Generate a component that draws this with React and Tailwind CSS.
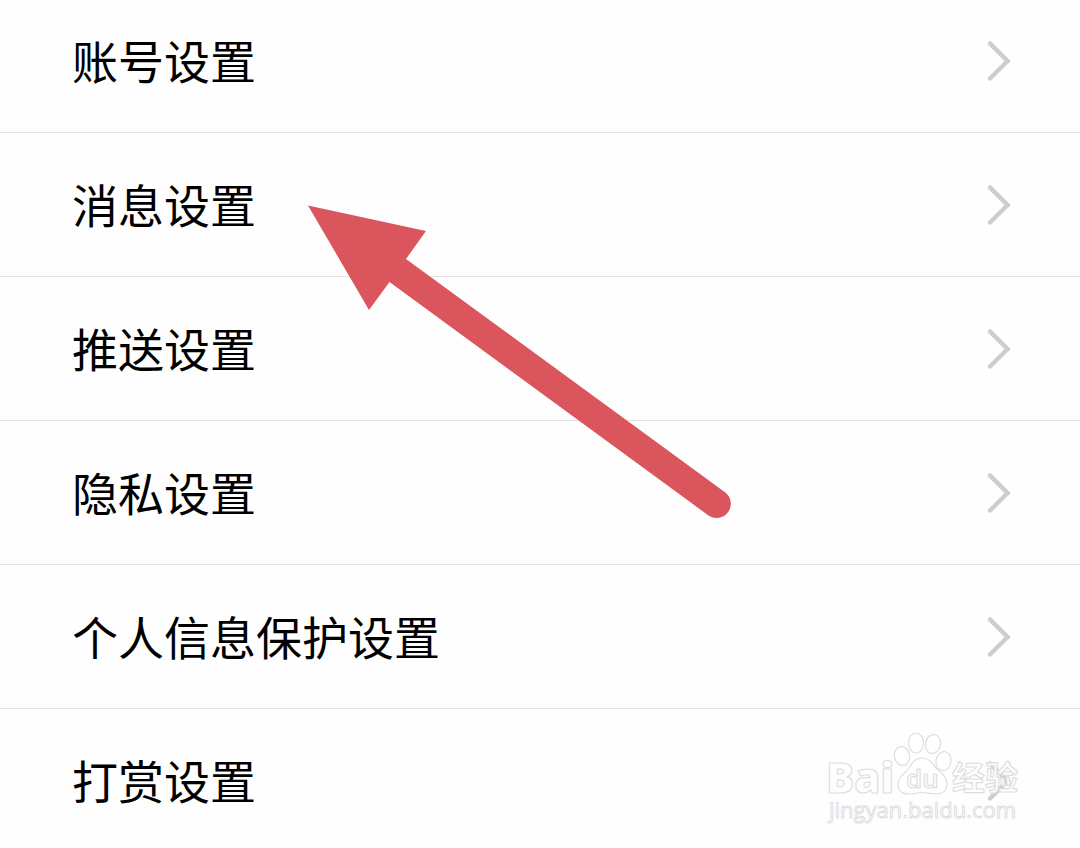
const settings = [
  "账号设置",
  "消息设置",
  "推送设置",
  "隐私设置",
  "个人信息保护设置",
  "打赏设置",
];

function Chevron() {
  return (
    <svg className="h-11 w-7 shrink-0" viewBox="0 0 28 44" fill="none" aria-hidden="true">
      <path d="M6 4.500 L23.500 22 L6 39.500" stroke="#cdcdcd" strokeWidth="4.500" strokeLinecap="round" strokeLinejoin="miter" />
    </svg>
  );
}

function SettingRow({ label }) {
  return (
    <li className="border-b border-[#e2e2e2] last:border-b-0">
      <a href="#" className="flex h-[143px] items-center justify-between pr-[68px] pl-[72px]">
        <span className="pb-1 text-[46px] leading-none text-black">{label}</span>
        <Chevron />
      </a>
    </li>
  );
}

function Arrow() {
  return (
    <svg
      className="pointer-events-none absolute top-[205px] left-[308px] h-[315px] w-[424px]"
      viewBox="308 205 424 315"
      aria-hidden="true"
    >
      <path d="M308 205.500 L426 231 L406 259 L725.700 492.700 A14.300 14.300 0 0 1 708.800 515.700 L389.500 282 L369 310 Z" fill="#db565c" />
    </svg>
  );
}

function Watermark() {
  return (
    <svg
      className="pointer-events-none absolute right-[54px] bottom-[22px] h-[102px] w-[204px] font-['Open_Sans','Noto_Sans',sans-serif]"
      viewBox="822 728 204 102"
      fill="#ffffff"
      fillOpacity="0.85"
      stroke="#dedede"
      strokeWidth="1.2"
      strokeLinejoin="round"
    >
      <text x="826" y="793" fontSize="42" fontWeight="800">Bai</text>
      <ellipse cx="902" cy="756" rx="7.500" ry="9.500" transform="rotate(-12 902 756)" />
      <ellipse cx="916" cy="743" rx="7.500" ry="10" />
      <ellipse cx="933" cy="744" rx="7.500" ry="9.500" transform="rotate(12 933 744)" />
      <ellipse cx="943.500" cy="761" rx="7.500" ry="9.500" transform="rotate(10 943 761)" />
      <path d="M922 758 C929 758 933 763 936 768 C941 773 947 777 947 784 C947 791 942 794 936 794 C930 794 927 792.500 922 792.500 C917 792.500 914 794 909 794 C902 794 898 790 898 784 C898 777 905 773 909 768 C912 763 915 758 922 758 Z" />
      <text x="906" y="788" fontSize="26" fontWeight="600">du</text>
      <text x="952" y="790" fontSize="33" fontWeight="700" fontFamily="Noto Sans CJK SC, sans-serif">经验</text>
      <text x="829" y="818" fontSize="22" fontWeight="500" strokeWidth="1">jingyan.baidu.com</text>
    </svg>
  );
}

export default function App() {
  return (
    <main className="relative min-h-screen overflow-hidden bg-[#fefefe] font-['Noto_Sans_CJK_SC',sans-serif]">
      <ul className="-mt-[11px]">
        {settings.map((label) => (
          <SettingRow key={label} label={label} />
        ))}
      </ul>
      <Arrow />
      <Watermark />
    </main>
  );
}
